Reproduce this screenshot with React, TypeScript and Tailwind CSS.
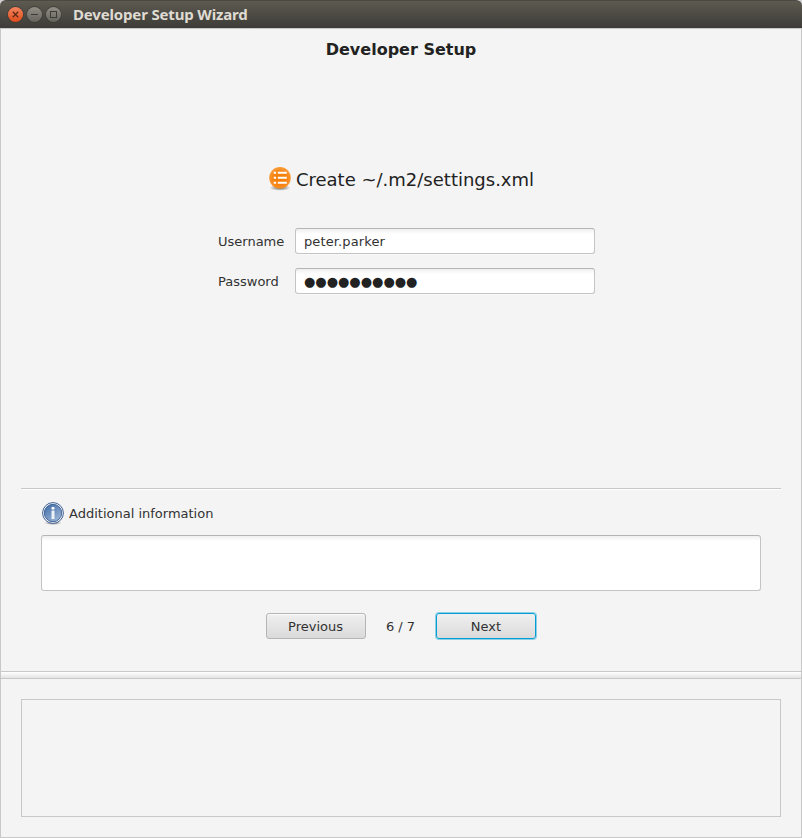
import type { ReactNode } from "react";

function WindowButton({ kind }: { kind: "close" | "minimize" | "maximize" }) {
  const close = kind === "close";
  const ink = close ? "#5c2a17" : "#3c3b37";
  return (
    <svg width="17" height="17" viewBox="0 0 17 17" className="block shrink-0">
      <defs>
        <linearGradient id={`win-${kind}`} x1="0" y1="0" x2="0" y2="1">
          <stop offset="0" stopColor={close ? "#f58560" : "#928f86"} />
          <stop offset="1" stopColor={close ? "#df4c1a" : "#65635c"} />
        </linearGradient>
      </defs>
      <circle cx="8.5" cy="8.5" r="8.2" fill="#3a3934" />
      <circle cx="8.5" cy="8.5" r="7.6" fill={`url(#win-${kind})`} />
      {close && <path d="M5.8 5.8l5.4 5.4M11.2 5.8l-5.4 5.4" stroke={ink} strokeWidth="1.3" />}
      {kind === "minimize" && <path d="M5 8.5h7" stroke={ink} strokeWidth="1" />}
      {kind === "maximize" && <rect x="5.5" y="5.5" width="6" height="6" fill="none" stroke={ink} strokeWidth="1" />}
    </svg>
  );
}

function ListIcon() {
  return (
    <svg width="24" height="26" viewBox="0 0 24 26" className="block shrink-0">
      <defs>
        <radialGradient id="list-fill" cx="0.5" cy="0.55" r="0.55">
          <stop offset="0" stopColor="#f57900" />
          <stop offset="0.6" stopColor="#f68413" />
          <stop offset="1" stopColor="#fa9d3b" />
        </radialGradient>
        <radialGradient id="list-shadow">
          <stop offset="0" stopColor="#000" stopOpacity="0.6" />
          <stop offset="1" stopColor="#000" stopOpacity="0" />
        </radialGradient>
      </defs>
      <ellipse cx="12" cy="21.8" rx="10.5" ry="3" fill="url(#list-shadow)" />
      <circle cx="12" cy="11.8" r="10.8" fill="url(#list-fill)" />
      <path d="M5.7 6.8h2.4M5.7 11.8h2.4M5.7 16.8h2.4M9.8 6.8h9M9.8 11.8h9M9.8 16.8h9" stroke="#fff" strokeWidth="2" />
    </svg>
  );
}

function InfoIcon() {
  return (
    <svg width="24" height="24" viewBox="0 0 24 24" className="block shrink-0">
      <defs>
        <linearGradient id="info-fill" x1="0.1" y1="0" x2="0.8" y2="1">
          <stop offset="0" stopColor="#3f6ca8" />
          <stop offset="1" stopColor="#a0b9d8" />
        </linearGradient>
        <radialGradient id="info-shadow">
          <stop offset="0" stopColor="#000" stopOpacity="0.5" />
          <stop offset="1" stopColor="#000" stopOpacity="0" />
        </radialGradient>
      </defs>
      <ellipse cx="12" cy="22" rx="9" ry="2" fill="url(#info-shadow)" />
      <circle cx="12" cy="12" r="10.4" fill="#fff" stroke="#3c5f95" strokeWidth="1" />
      <circle cx="12" cy="12" r="8.7" fill="url(#info-fill)" stroke="#35598f" strokeWidth="0.9" />
      <rect x="10.5" y="6" width="3" height="2.5" rx="0.7" fill="#fff" />
      <rect x="10.5" y="9.5" width="3" height="8.5" rx="0.5" fill="#eef2f7" />
    </svg>
  );
}

function Field({ label, children }: { label: string; children: ReactNode }) {
  return (
    <div className="flex h-[26px] items-center">
      <span className="w-[77px] pt-[2px]">{label}</span>
      <div className="flex h-[26px] w-[300px] items-center rounded-[3px] border border-[#c4c4c4] border-t-[#b5b5b5] bg-white bg-linear-to-b from-[#efefef] to-white to-[5px] px-2 pt-[2px] shadow-[0_1px_0_#f9f9f9]">
        {children}
      </div>
    </div>
  );
}

export default function App() {
  return (
    <div className="flex h-[838px] w-[802px] flex-col bg-[#d0d0d0] font-['DejaVu_Sans','Liberation_Sans',sans-serif] text-[13px] leading-4 text-[#323232]">
      <header className="flex h-7 shrink-0 items-center rounded-t-[6px] border-t border-[#4b4943] bg-linear-to-b from-[#5d5a50] to-[#3d3c38] pl-[7px]">
        <div className="flex gap-[2px]">
          <WindowButton kind="close" />
          <WindowButton kind="minimize" />
          <WindowButton kind="maximize" />
        </div>
        <h1 className="ml-[11px] pb-[2px] font-['Noto_Sans','Open_Sans',sans-serif] text-[15px] font-bold leading-5 tracking-[-0.16px] whitespace-nowrap text-[#dfdbd2]">
          Developer Setup Wizard
        </h1>
      </header>

      <div className="flex flex-1 flex-col border border-[#c8c8c8] bg-[#f4f4f4]">
        <main className="flex h-[642px] shrink-0 flex-col items-center">
          <h2 className="mt-[11px] text-[16px] font-bold leading-5 text-[#222]">Developer Setup</h2>

          <section className="mt-[106px] flex h-[322px] flex-col items-center">
            <div className="flex items-center gap-[4px] text-[18px] leading-6 text-[#222]">
              <ListIcon />
              <span className="pt-[2px]">Create ~/.m2/settings.xml</span>
            </div>
            <div className="mt-[36px] ml-[11px] flex flex-col gap-[14px]">
              <Field label="Username">
                <span className="tracking-[0.12px]">peter.parker</span>
              </Field>
              <Field label="Password">
                <span className="text-[#222]">●●●●●●●●●●</span>
              </Field>
            </div>
          </section>

          <section className="w-[760px] border-t border-[#c8c8c8] px-5 pt-3 shadow-[inset_0_1px_0_#fff]">
            <div className="flex items-center gap-[4px]">
              <InfoIcon />
              <span className="pt-[2px]">Additional information</span>
            </div>
            <div className="mt-[10px] h-14 rounded-[3px] border border-[#c4c4c4] border-t-[#b5b5b5] bg-white bg-linear-to-b from-[#efefef] to-white to-[5px]" />
          </section>

          <nav className="mt-[22px] flex items-center">
            <button className="h-[26px] w-[100px] rounded-[3px] border border-[#b5b5b5] bg-linear-to-b from-[#f0f0f0] to-[#dadada] pt-[2px] pr-[1px] shadow-[inset_0_1px_0_#fafafa]">
              Previous
            </button>
            <span className="w-[70px] pt-[2px] pr-[1px] text-center">6 / 7</span>
            <button className="h-[26px] w-[100px] rounded-[3px] border border-[#039ed3] bg-linear-to-b from-[#f0f0f0] to-[#dadada] pt-[2px] shadow-[0_0_0_1px_#8ccfe6]">
              Next
            </button>
          </nav>
        </main>

        <div className="h-2 shrink-0 border-y border-[#c8c8c8] bg-linear-to-b from-white to-[#e4e4e4]" />

        <footer className="flex-1 p-5">
          <div className="h-[118px] border border-[#c8c8c8]" />
        </footer>
      </div>
    </div>
  );
}
